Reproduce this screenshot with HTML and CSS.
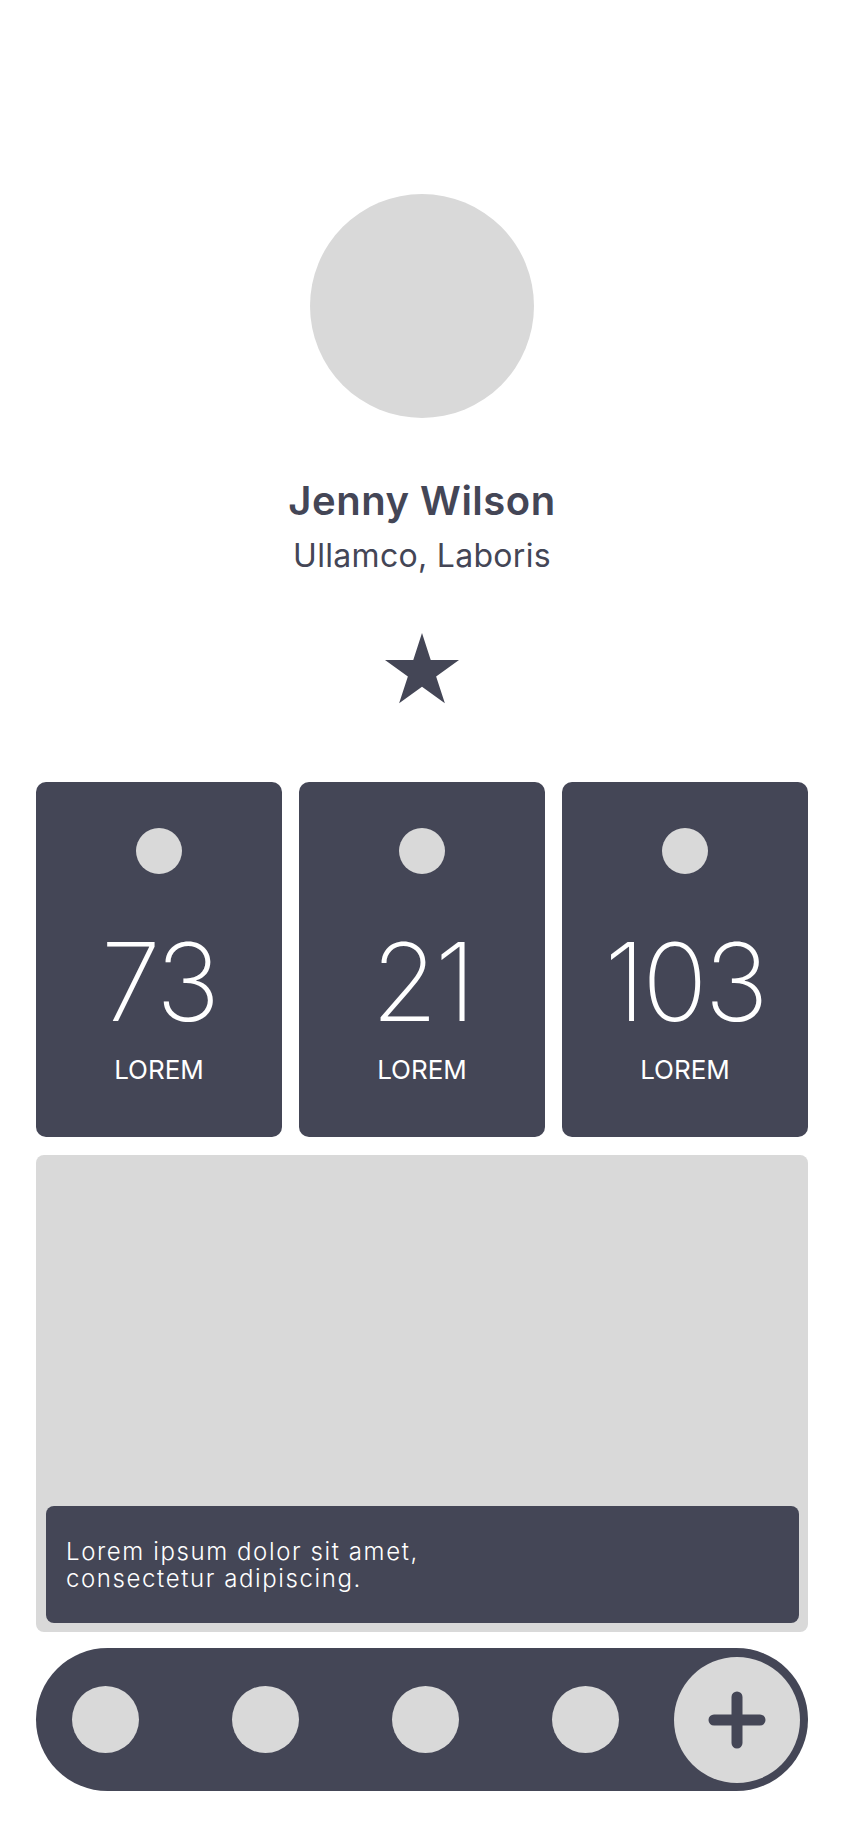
FILE: index.html
```html
<!DOCTYPE html>
<html lang="en">

<head>
    <meta charset="utf-8">
    <title>Profile</title>
    <link rel="stylesheet" href="styles.css">
</head>

<body>

    <div class="profile-page">

        <!-- Header -->
        <div class="profile-head">
            <div class="profile-avatar"></div>
            <h1 class="profile-name">Jenny Wilson</h1>
            <p class="profile-role">Ullamco, Laboris</p>
            <svg class="profile-star" viewBox="0 0 74 71" width="74" height="71">
                <polygon points="37,0 45.73,26.88 74,26.9 51.13,43.49 59.87,70.37 37,53.76 14.13,70.37 22.87,43.49 0,26.9 28.27,26.88" />
            </svg>
        </div>

        <!-- Stats -->
        <div class="stats">
            <div class="stat-card">
                <div class="stat-dot"></div>
                <div class="stat-value">73</div>
                <div class="stat-label">LOREM</div>
            </div>
            <div class="stat-card">
                <div class="stat-dot"></div>
                <div class="stat-value">21</div>
                <div class="stat-label">LOREM</div>
            </div>
            <div class="stat-card">
                <div class="stat-dot"></div>
                <div class="stat-value">103</div>
                <div class="stat-label">LOREM</div>
            </div>
        </div>

        <!-- Media -->
        <div class="media">
            <div class="media-caption">
                <p>Lorem ipsum dolor sit amet,<br>consectetur adipiscing.</p>
            </div>
        </div>

        <!-- Bottom nav -->
        <div class="tabbar">
            <div class="tab-dots">
                <a href="#0" class="tab-dot"></a>
                <a href="#0" class="tab-dot"></a>
                <a href="#0" class="tab-dot"></a>
                <a href="#0" class="tab-dot"></a>
            </div>
            <a href="#0" class="tab-add">
                <svg viewBox="0 0 58 58" width="58" height="58">
                    <path d="M29 6 V52 M6 29 H52" />
                </svg>
            </a>
        </div>

    </div>

</body>

</html>
```

FILE: styles.css
```css
body {
    margin: 0;
    background-color: #ffffff;
    font-family: "Inter", "Noto Sans", sans-serif;
    color: #444656;
}

.profile-page {
    width: 844px;
    padding: 0 36px;
    box-sizing: border-box;
}

/* Header */
.profile-head {
    display: flex;
    flex-direction: column;
    align-items: center;
    padding-top: 194px;
}

.profile-avatar {
    width: 224px;
    height: 224px;
    border-radius: 50%;
    background-color: #d9d9d9;
}

.profile-name {
    margin: 59px 0 0 0;
    font-size: 40px;
    line-height: 48px;
    font-weight: 600;
    letter-spacing: 0.5px;
}

.profile-role {
    margin: 11px 0 0 0;
    font-size: 32px;
    line-height: 40px;
    font-weight: 400;
    letter-spacing: 0.3px;
}

.profile-star {
    display: block;
    margin-top: 57px;
    fill: #444656;
}

/* Stat cards */
.stats {
    display: grid;
    grid-template-columns: repeat(3, 1fr);
    gap: 17px;
    margin-top: 78px;
}

.stat-card {
    height: 355px;
    border-radius: 10px;
    background-color: #444656;
    color: #ffffff;
    display: flex;
    flex-direction: column;
    align-items: center;
    padding-top: 46px;
    box-sizing: border-box;
}

.stat-dot {
    width: 46px;
    height: 46px;
    border-radius: 50%;
    background-color: #d9d9d9;
}

.stat-value {
    margin-top: 54px;
    font-size: 108px;
    line-height: 108px;
    font-weight: 200;
    letter-spacing: -3px;
}

.stat-label {
    margin-top: 18px;
    font-size: 26px;
    line-height: 32px;
    font-weight: 400;
}

/* Media block */
.media {
    margin-top: 18px;
    height: 477px;
    border-radius: 8px;
    background-color: #d9d9d9;
    padding: 0 9px 9px 10px;
    box-sizing: border-box;
    display: flex;
    flex-direction: column;
    justify-content: flex-end;
}

.media-caption {
    height: 117px;
    border-radius: 8px;
    background-color: #444656;
    display: flex;
    align-items: center;
    padding: 0 20px;
}

.media-caption p {
    margin: 0;
    color: #ffffff;
    font-size: 24px;
    line-height: 27px;
    font-weight: 300;
    letter-spacing: 1.6px;
}

/* Tab bar */
.tabbar {
    margin-top: 16px;
    height: 143px;
    border-radius: 72px;
    background-color: #444656;
    display: flex;
    align-items: center;
    padding: 0 8px 0 36px;
}

.tab-dots {
    display: flex;
    gap: 93px;
}

.tab-dot {
    flex-shrink: 0;
    width: 67px;
    height: 67px;
    border-radius: 50%;
    background-color: #d9d9d9;
}

.tab-add {
    flex-shrink: 0;
    margin-left: auto;
    width: 126px;
    height: 126px;
    border-radius: 50%;
    background-color: #d9d9d9;
    display: flex;
    align-items: center;
    justify-content: center;
}

.tab-add path {
    stroke: #444656;
    stroke-width: 11;
    stroke-linecap: round;
    fill: none;
}
```
